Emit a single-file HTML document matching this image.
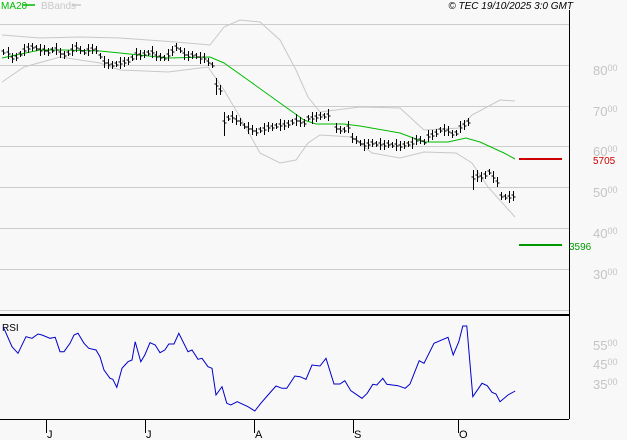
<!DOCTYPE html>
<html><head><meta charset="utf-8"><style>
html,body{margin:0;padding:0;background:#f8f8f8;}
svg{display:block;font-family:"Liberation Sans",sans-serif;}
</style></head><body>
<svg id="s" width="627" height="440" viewBox="0 0 627 440" xmlns="http://www.w3.org/2000/svg">
<rect width="627" height="440" fill="#f8f8f8"/>
<g stroke="#cccccc" stroke-width="1">
<line x1="0" y1="24.5" x2="569" y2="24.5"/>
<line x1="0" y1="65.5" x2="569" y2="65.5"/>
<line x1="0" y1="106.5" x2="569" y2="106.5"/>
<line x1="0" y1="146.5" x2="569" y2="146.5"/>
<line x1="0" y1="187.5" x2="569" y2="187.5"/>
<line x1="0" y1="228.5" x2="569" y2="228.5"/>
<line x1="0" y1="269.5" x2="569" y2="269.5"/>
<line x1="0" y1="310.5" x2="569" y2="310.5"/>
</g>
<g fill="#c4c4c4" font-size="13">
<text x="593" y="75">80<tspan font-size="9" dy="-4">00</tspan></text>
<text x="593" y="116">70<tspan font-size="9" dy="-4">00</tspan></text>
<text x="593" y="156">60<tspan font-size="9" dy="-4">00</tspan></text>
<text x="593" y="197">50<tspan font-size="9" dy="-4">00</tspan></text>
<text x="593" y="238">40<tspan font-size="9" dy="-4">00</tspan></text>
<text x="593" y="279">30<tspan font-size="9" dy="-4">00</tspan></text>
<text x="593" y="350">55<tspan font-size="9" dy="-4">00</tspan></text>
<text x="593" y="369">45<tspan font-size="9" dy="-4">00</tspan></text>
<text x="593" y="389">35<tspan font-size="9" dy="-4">00</tspan></text>
</g>
<text x="1" y="9" font-size="10" fill="#00bb00">MA20</text>
<line x1="23" y1="5" x2="35" y2="5" stroke="#00bb00" stroke-width="1.5"/>
<text x="41" y="9" font-size="10" fill="#c8c8c8">BBands</text>
<line x1="72" y1="5" x2="81" y2="5" stroke="#c8c8c8" stroke-width="1.5"/>
<text x="573" y="9" font-size="10" font-style="italic" text-anchor="end" fill="#000">© TEC 19/10/2025 3:0 GMT</text>
<line x1="569.5" y1="10" x2="569.5" y2="419" stroke="#000"/>
<line x1="0" y1="315" x2="569" y2="315" stroke="#000" stroke-width="2"/>
<line x1="0" y1="419.5" x2="569" y2="419.5" stroke="#000"/>
<line x1="519" y1="159" x2="562" y2="159" stroke="#cc0000" stroke-width="2"/>
<text x="593" y="164" font-size="10" fill="#cc0000">5705</text>
<line x1="519" y1="245" x2="562" y2="245" stroke="#009900" stroke-width="2"/>
<text x="569" y="250" font-size="10" fill="#009900">3596</text>
<text x="2" y="331" font-size="10" fill="#000">RSI</text>
<g stroke="#000"><line x1="46.5" y1="419" x2="46.5" y2="433"/><line x1="145.5" y1="419" x2="145.5" y2="433"/><line x1="254.5" y1="419" x2="254.5" y2="433"/><line x1="353.5" y1="419" x2="353.5" y2="433"/><line x1="458.5" y1="419" x2="458.5" y2="433"/></g>
<g font-size="11" fill="#000"><text x="47" y="438">J</text><text x="146" y="438">J</text><text x="255" y="438">A</text><text x="354" y="438">S</text><text x="459" y="438">O</text></g>
<polyline fill="none" stroke="#c8c8c8" points="2,35 40,38 80,37 120,38 176,42 210,45 224,27 240,20 260,22 280,40 296,70 308,97 320,112 360,107 400,108 424,130 460,128 472,115 500,100 515,101"/>
<polyline fill="none" stroke="#c8c8c8" points="2,82 24,67 60,57 100,63 120,70 168,72 208,67 224,90 240,117 260,153 280,163 296,160 308,143 320,135 352,137 372,153 400,158 424,152 456,153 472,163 488,187 515,217"/>
<polyline fill="none" stroke="#00bb00" points="2,58 16,55 40,50 64,50 100,51 120,53 168,58 210,57 224,63 248,80 280,103 304,120 316,124 344,124 360,126 400,133 424,142 448,142 466,138 480,142 504,153 515,159"/>
<g id="bars" stroke="#000" stroke-width="1"></g>
<polyline id="rsi" fill="none" stroke="#0000cc" stroke-width="1"/>
</svg>
<script>
var m=[[3,52],[8,53],[12,58],[16,57],[20,54],[24,50],[28,48],[32,47],[36,48],[40,50],[44,50],[48,52],[52,50],[56,49],[60,53],[64,55],[68,53],[72,50],[76,47],[80,50],[84,52],[88,50],[92,49],[96,50],[100,56],[104,62],[108,64],[112,65],[116,64],[120,63],[124,62],[128,61],[132,58],[136,54],[140,55],[144,54],[148,53],[152,52],[156,56],[160,57],[164,58],[168,55],[172,51],[176,47],[180,50],[184,54],[188,56],[192,55],[196,56],[200,58],[204,58],[208,62],[212,65],[216,85],[220,90],[224,122],[228,118],[232,117],[236,120],[240,122],[244,126],[248,128],[252,130],[256,132],[260,130],[264,129],[268,127],[272,127],[276,126],[280,125],[284,125],[288,124],[292,122],[296,120],[300,122],[304,123],[308,118],[312,118],[316,117],[320,116],[324,116],[328,115],[336,128],[340,130],[344,130],[348,127],[352,138],[356,140],[360,143],[364,145],[368,144],[372,143],[376,144],[380,144],[384,145],[388,144],[392,145],[396,145],[400,146],[404,145],[408,144],[412,143],[416,140],[420,140],[424,142],[428,136],[432,135],[436,133],[440,130],[444,130],[448,131],[452,134],[456,133],[460,127],[464,125],[468,122],[473,178],[477,176],[481,177],[485,175],[489,172],[493,177],[497,182],[501,196],[505,197],[509,197],[513,196]];
var h='';m.forEach(function(p,i){var r=3+((i*7)%4);var hi=p[1]-r,lo=p[1]+r;if(p[0]==216){hi=78;lo=95}if(p[0]==224){hi=112;lo=136}if(p[0]==473){hi=170;lo=190}var x=p[0]+.5;h+='<line x1="'+x+'" y1="'+hi+'" x2="'+x+'" y2="'+lo+'"/><line x1="'+(x-2)+'" y1="'+(p[1]-1)+'" x2="'+x+'" y2="'+(p[1]-1)+'"/><line x1="'+x+'" y1="'+(p[1]+1)+'" x2="'+(x+2)+'" y2="'+(p[1]+1)+'"/>';});
document.getElementById('bars').innerHTML=h;
var r=[[8,320],[30,380],[45,400],[65,350],[80,355],[95,342],[105,345],[125,355],[138,352],[150,395],[160,395],[175,370],[185,345],[195,340],[210,370],[222,385],[240,390],[250,410],[260,450],[275,475],[282,478],[292,502],[305,445],[320,425],[330,420],[338,365],[352,425],[362,405],[375,368],[388,375],[400,398],[412,390],[422,372],[435,372],[447,340],[470,395],[480,390],[495,418],[505,415],[520,440],[530,445],[540,525],[555,500],[567,550],[577,555],[593,545],[620,560],[637,573],[652,550],[670,525],[690,498],[705,505],[717,505],[737,468],[750,470],[765,478],[780,435],[800,438],[815,415],[835,492],[850,492],[862,482],[877,512],[905,535],[918,520],[932,493],[942,495],[957,475],[967,493],[995,497],[1013,505],[1025,492],[1048,422],[1060,430],[1085,370],[1120,352],[1133,405],[1147,365],[1157,318],[1167,318],[1182,530],[1205,490],[1218,497],[1230,517],[1240,522],[1250,545],[1270,525],[1288,513]];
document.getElementById('rsi').setAttribute('points',r.map(function(p){return (p[0]/2.5).toFixed(1)+','+(p[1]/3+220).toFixed(1)}).join(' '));
</script>
</body></html>
